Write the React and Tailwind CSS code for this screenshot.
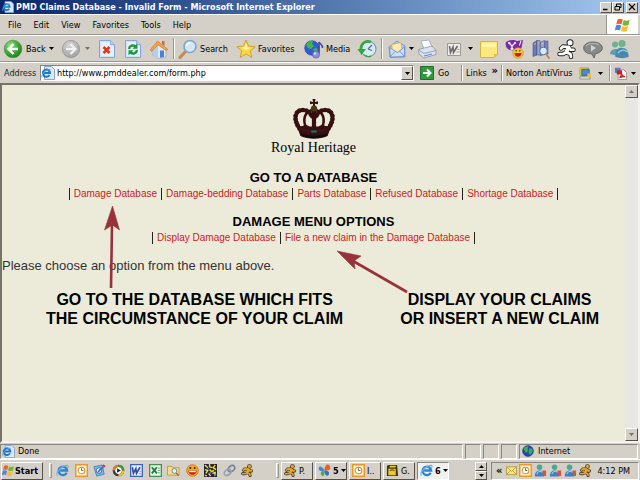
import React from "react";

const UI = "font-['DejaVu_Sans_Condensed','DejaVu_Sans',sans-serif]";

function Icon({ size = 20, box = 20, children }) {
  return (
    <svg width={size} height={size} viewBox={`0 0 ${box} ${box}`} className="shrink-0" aria-hidden="true">
      {children}
    </svg>
  );
}

const Caret = () => (
  <svg width="5" height="3" viewBox="0 0 5 3" className="shrink-0" aria-hidden="true">
    <path d="M0 0h5L2.500 3z" fill="currentColor" />
  </svg>
);

const Divider = () => <div className="mx-px my-0.5 w-0.5 shrink-0 self-stretch border-r border-l border-r-white border-l-[#9a968e]" />;

/* ---------- toolbar drawings ---------- */

const BackIcon = () => (
  <Icon>
    <defs>
      <radialGradient id="back" cx=".35" cy=".3" r=".8">
        <stop offset="0" stopColor="#9be08a" />
        <stop offset=".5" stopColor="#3fae37" />
        <stop offset="1" stopColor="#187a1c" />
      </radialGradient>
    </defs>
    <circle cx="10" cy="10" r="8.800" fill="url(#back)" stroke="#3b8f3b" strokeWidth=".6" />
    <path d="M10.500 5 5.500 10l5 5M6 10h9" fill="none" stroke="#fff" strokeWidth="2.400" />
  </Icon>
);
const ForwardIcon = () => (
  <Icon>
    <defs>
      <radialGradient id="fwd" cx=".4" cy=".3" r=".8">
        <stop offset="0" stopColor="#d6d6d6" />
        <stop offset="1" stopColor="#9c9c9c" />
      </radialGradient>
    </defs>
    <circle cx="10" cy="10" r="8.600" fill="url(#fwd)" stroke="#8d8d8d" strokeWidth=".7" />
    <path d="M9.500 5l5 5-5 5M14 10H5" fill="none" stroke="#f2f2f2" strokeWidth="2.200" />
  </Icon>
);
const Sheet = () => (
  <>
    <path d="M2.500 1.500h11l4 4v13h-15z" fill="#cfe2fb" stroke="#7fa6e0" />
    <path d="M4 3h9v4h4v10H4z" fill="#e6f0fe" />
    <path d="M13.500 1.500v4h4" fill="#b5d0f5" stroke="#7fa6e0" strokeWidth=".8" />
  </>
);
const StopIcon = () => (
  <Icon>
    <Sheet />
    <path d="M6.500 8l6 6M12.500 8l-6 6" stroke="#e2361b" strokeWidth="2.600" />
  </Icon>
);
const RefreshIcon = () => (
  <Icon>
    <Sheet />
    <path d="M6 10c.5-3.500 4-4.500 6.500-2.500M14 11c-.5 3.500-4 4.500-6.500 2.500" fill="none" stroke="#24953a" strokeWidth="2.400" />
    <path d="M14.500 4.500v5.200h-5zM5.500 16.500v-5.200h5z" fill="#24953a" />
  </Icon>
);
const HomeIcon = () => (
  <Icon>
    <path d="M3.500 9.500 9 4l8 6v8l-7 1.500L3.500 16z" fill="#dfeafa" stroke="#8aa5d2" strokeWidth=".7" />
    <path d="M3.500 9.500 9 5v14l-5.500-3z" fill="#b7cdf0" />
    <path d="M1 11 8.500 2 19 10.500l-2 1L9 6l-6.500 6.500z" fill="#f0a24b" stroke="#cc7427" strokeWidth=".6" />
    <path d="M13 2h2.500v5L13 5z" fill="#d26b36" />
    <path d="M11 11.500h4V18l-4 .8z" fill="#4f7fd0" />
  </Icon>
);
const SearchIcon = () => (
  <Icon>
    <path d="M7.500 12.500 2 18.500" stroke="#c7894c" strokeWidth="3" strokeLinecap="round" />
    <circle cx="12" cy="7.500" r="6" fill="#cfe8fb" stroke="#7da4d6" strokeWidth="1.600" />
    <path d="M8.500 7c.3-2 2-3.200 4-3" fill="none" stroke="#fff" strokeWidth="1.600" />
  </Icon>
);
const StarIcon = () => (
  <Icon>
    <path d="M10 1.200l2.600 6 6.600.5-5 4.300 1.700 6.500-5.900-3.600-5.800 3.600 1.600-6.500-5-4.300 6.600-.5z" fill="#fbd93d" stroke="#cf962a" strokeWidth=".9" strokeLinejoin="round" />
    <path d="M10 4l1.500 4.500 4 .2L10 11l-5-2.500 3.600-.3z" fill="#fff3a0" />
  </Icon>
);
const MediaIcon = () => (
  <Icon>
    <circle cx="8" cy="9" r="7.300" fill="#2d5fd0" stroke="#26439a" strokeWidth=".6" />
    <path d="M2 6c2-4 6-4.500 7-4l-1 3 2 2-3 3-3-1zM9 10l4-1 1 3-3 3z" fill="#43b548" />
    <path d="M15 15V3c1 2.500 4 2.500 3.500 6" fill="none" stroke="#4a47a6" strokeWidth="1.600" />
    <circle cx="12" cy="15.500" r="3.600" fill="#8d8be0" stroke="#4d4aa8" strokeWidth=".6" />
    <circle cx="11" cy="14.500" r="1.200" fill="#d9d8fb" />
  </Icon>
);
const HistoryIcon = () => (
  <Icon>
    <circle cx="11.500" cy="10" r="7.500" fill="#d6ecf2" stroke="#7b9bb0" strokeWidth="1.200" />
    <path d="M11 10l4-4M11 10l4 1.500" stroke="#4d6f95" strokeWidth="1.200" />
    <path d="M14 3C8 1 3.500 5 4 11" fill="none" stroke="#3aa445" strokeWidth="2.800" />
    <path d="M.5 10h8.500l-4.500 6z" fill="#3aa445" />
    <path d="M7 16c2 1.500 5 2 7 1" fill="none" stroke="#3aa445" strokeWidth="1.500" />
  </Icon>
);
const MailIcon = () => (
  <Icon>
    <path d="M2 8l8-6 8 5v11l-15 .5z" fill="#a5c6f0" stroke="#6791cc" strokeWidth=".8" />
    <path d="M5 5.500l9-2 1 7-5 3-5-3z" fill="#ffedb0" stroke="#e0a951" strokeWidth=".8" />
    <path d="M2.500 8.500l8 5 7-5.500v9.500l-14 .5z" fill="#c9dff9" stroke="#6791cc" strokeWidth=".8" />
    <path d="M3 18l5.500-6M17.500 17.500l-5-5.500" stroke="#6791cc" strokeWidth=".8" />
  </Icon>
);
const PrinterIcon = () => (
  <Icon>
    <path d="M4 2l8-1 3 7-8 2z" fill="#fff" stroke="#8fa5c5" strokeWidth=".8" />
    <path d="M1.500 10.500L15 7l4 4.500v4L7 19l-5-4z" fill="#dce3ee" stroke="#8594ad" strokeWidth=".8" />
    <path d="M2 11l5 3.500 12-3" fill="none" stroke="#8594ad" strokeWidth=".8" />
    <path d="M7 17l8-2" stroke="#5f8edb" strokeWidth="1.200" />
  </Icon>
);
const GreyWordIcon = () => (
  <Icon>
    <path d="M3.500 4.500h13v12h-13z" fill="#ecebe8" stroke="#9b9a97" />
    <path d="M5.500 7l1 6.500L9 8l.5 5.500L13.500 7" fill="none" stroke="#6a6a6a" strokeWidth="1.600" />
    <path d="M13.500 10.500h2M12.500 13h3" stroke="#a0a0a0" />
  </Icon>
);
const NoteIcon = () => (
  <Icon>
    <path d="M1.500 2.500h17v12.500l-3.500 3.500H1.500z" fill="#fde77f" stroke="#d6b33c" />
    <path d="M3 4h14v4H3z" fill="#fff3ae" />
    <path d="M18.500 15H15v3.500z" fill="#e5bd3a" />
  </Icon>
);
const YahooIcon = () => (
  <Icon>
    <path d="M1 3c4-3 9-2 11-1l6-1-1.500 8-3 3-9-1C0 9 .5 5 1 3z" fill="#7a2aa8" />
    <path d="M4 4l3 3 3-3M7 7v3M5.500 10h3M3 4h2.500M9 4h2" stroke="#fff" strokeWidth="1.300" fill="none" />
    <path d="M16 1.500l-1.500 5" stroke="#fff" strokeWidth="1" />
    <circle cx="13" cy="14" r="5.300" fill="#fac42d" stroke="#c98a17" strokeWidth=".6" />
    <path d="M9.500 14h7c0 5-7 5-7 0z" fill="#c02318" />
    <circle cx="11.200" cy="11.800" r=".8" fill="#333" />
    <circle cx="14.800" cy="11.800" r=".8" fill="#333" />
  </Icon>
);
const BookIcon = () => (
  <Icon>
    <path d="M2 4l4-2.500V16l-4 1.500z" fill="#6f78b6" stroke="#4b5590" strokeWidth=".6" />
    <path d="M6 1.500h3V16H6zM9.500 3l4-1.500V15l-4 2z" fill="#9aa5d4" stroke="#4b5590" strokeWidth=".6" />
    <path d="M14 2h3v13h-3z" fill="#7c87be" stroke="#4b5590" strokeWidth=".6" />
    <path d="M3 5.500l2-1M10.500 5l2-.6M7 4h1.500" stroke="#e4c45a" />
    <circle cx="12.500" cy="12" r="3.800" fill="#d5ecfb" stroke="#56789e" />
    <path d="M15 15l3 4" stroke="#c08a4b" strokeWidth="2" strokeLinecap="round" />
  </Icon>
);
function Runner({ size = 20, fill = "#fff" }) {
  const body = "M11.500 8.500L9 13M11 8l-5-.5-2 2M12 8.500l1.500 2.200h3M9 13.500l-3 1.500H2.500M9.500 13.500l4 1.500.5 3";
  return (
    <Icon size={size}>
      <circle cx="13" cy="3.800" r="3.500" fill="#222" />
      <path d={body} stroke="#222" strokeWidth="4.400" strokeLinecap="round" strokeLinejoin="round" fill="none" />
      <circle cx="13" cy="3.800" r="2.500" fill={fill} />
      <path d={body} stroke={fill} strokeWidth="2.600" strokeLinecap="round" strokeLinejoin="round" fill="none" />
      <path d="M11.500 8.500L9.500 13" stroke={fill} strokeWidth="4" strokeLinecap="round" />
    </Icon>
  );
}
const BubbleIcon = () => (
  <Icon>
    <path d="M10 3c5.500 0 9.300 2.500 9.300 6 0 3-2.800 5-6.800 5.700L11 19l-2-4C4 14.800.7 12.400.7 9 .7 5.500 4.500 3 10 3z" fill="#8a8a8a" stroke="#595959" strokeWidth=".8" />
    <path d="M3 7c2-3 10-3.500 13-1" stroke="#bdbdbd" fill="none" />
    <path d="M8 6l5 3-5 3.500z" fill="#d4d4d4" />
  </Icon>
);
function Buddies({ size = 20 }) {
  return (
    <Icon size={size}>
      <circle cx="6" cy="5.500" r="3" fill="#6fae92" />
      <path d="M1 15c0-6 10-7 11-1l-3 3z" fill="#5f9fb4" />
      <circle cx="13" cy="4.500" r="3.600" fill="#6cb28a" />
      <path d="M6.500 18c-1-8 4-10 7-9 5 0 6.500 5 6 9-4 1.500-9 1.500-13 0z" fill="#4c86ae" />
      <path d="M9 14c2-3 6-4 10-1" stroke="#8fcdc9" strokeWidth="1.500" fill="none" />
    </Icon>
  );
}

/* ---------- small drawings ---------- */

function IEIcon({ size = 13 }) {
  return (
    <Icon size={size} box={14}>
      <path d="M11.500 9.500A4.600 4.600 0 1 1 12 7H4.500" fill="none" stroke="#2b83d8" strokeWidth="2.500" />
      <path d="M1.500 12.500C-1 9 7 1 12.500 1.500c1 .8.500 2-.3 3" fill="none" stroke="#67b2ee" strokeWidth="1.200" />
    </Icon>
  );
}
function IEPage({ size = 14 }) {
  return (
    <Icon size={size} box={14}>
      <path d="M3.500.5h7l3 3v10h-10z" fill="#dbe9fc" stroke="#7d9fd0" strokeWidth=".9" />
      <path d="M8.500 9A3.600 3.600 0 1 1 9 7H3" fill="none" stroke="#1f76cc" strokeWidth="2" />
      <path d="M1 11.500C-.5 9 5 3 9.500 3.500" fill="none" stroke="#5daaf0" />
    </Icon>
  );
}
function WindowsLogo({ size = 14 }) {
  return (
    <Icon size={size} box={16}>
      <path d="M2.500 2.500c2-1.200 3.500-1 5.200 0L6.500 7.500C5 6.500 3.300 6.500 1.300 7.500z" fill="#e8642c" />
      <path d="M8.700 3c2 1 3.700 1 6-.2L13.500 8c-2 1-4 1-6 0z" fill="#74b53c" />
      <path d="M1 8.600c2-1.200 3.500-1 5.200 0L5 13.600c-1.500-1-3.200-1-5.200 0z" fill="#4a86dc" />
      <path d="M7.200 9c2 1 3.700 1 6-.2L12 14c-2 1-4 1-6 0z" fill="#f5be32" />
    </Icon>
  );
}
const Globe = ({ size = 12 }) => (
  <Icon size={size} box={12}>
    <circle cx="6" cy="6" r="5.400" fill="#2346b8" stroke="#182a6b" strokeWidth=".6" />
    <path d="M1.500 4C3 1 6 1 6.500 1.500L5.500 4l1 1.500L4 8zM7.500 3l3 1v3l-2.500 3-1.500-3z" fill="#39b24a" />
  </Icon>
);
const ClockIcon = ({ size = 13 }) => (
  <Icon size={size} box={14}>
    <path d="M.8.8h12.400v12.400H.8z" fill="#fff3cf" stroke="#e79a2b" strokeWidth="1.600" />
    <circle cx="7" cy="7" r="3.600" fill="#fff" stroke="#d28b2f" strokeWidth="1.100" />
    <path d="M7 4.500V7h2" fill="none" stroke="#7d5a22" />
  </Icon>
);
const ComposeIcon = () => (
  <Icon size={13} box={14}>
    <path d="M1 3l9-2 2 10-8 2z" fill="#7fb8ee" stroke="#2f72b8" strokeWidth=".8" />
    <circle cx="6.500" cy="7" r="3" fill="#e9f4ff" stroke="#2468b4" />
    <path d="M5.500 8.500l6-6" stroke="#3d65a8" strokeWidth="1.600" />
    <path d="M11 1l2 2" stroke="#d23d28" strokeWidth="1.800" />
  </Icon>
);
const PlayerIcon = () => (
  <Icon size={13} box={14}>
    <circle cx="7" cy="7" r="5" fill="#fff" strokeWidth="2.600" stroke="#333a46" />
    <path d="M2 7a5 5 0 0 1 5-5" fill="none" stroke="#eb7a29" strokeWidth="2.600" />
    <path d="M7 2a5 5 0 0 1 5 5" fill="none" stroke="#3a9a3c" strokeWidth="2.600" />
    <path d="M12 7a5 5 0 0 1-5 5" fill="none" stroke="#f0c02f" strokeWidth="2.600" />
    <path d="M5.500 4.500l4 2.500-4 2.500z" fill="#222" />
  </Icon>
);
const WordIcon = () => (
  <Icon size={13} box={14}>
    <path d="M.7.700h12.600v12.600H.7z" fill="#e8effb" stroke="#3c64b5" strokeWidth="1.400" />
    <path d="M2.500 3.500l1.200 6.500L6.300 5l.7 5 3.800-6.500" fill="none" stroke="#2b50a0" strokeWidth="1.800" />
    <path d="M10.500 8h1.500M9.500 10.500h2.500" stroke="#7d97cf" />
  </Icon>
);
const ExcelIcon = () => (
  <Icon size={13} box={14}>
    <path d="M.7.700h12.600v12.600H.7z" fill="#e7f5ea" stroke="#3f9350" strokeWidth="1.400" />
    <path d="M3 3.500L8.500 10M8.500 3.500L3 10" stroke="#237a38" strokeWidth="2" />
    <path d="M9.500 4.500H12M9.500 7H12M9.500 9.500H12" stroke="#5da96b" strokeWidth=".9" />
  </Icon>
);
const FolderIcon = () => (
  <Icon size={13} box={14}>
    <path d="M.5 2.500h5l1 1.500h6.500v8H.5z" fill="#f7da86" stroke="#b88b35" strokeWidth=".8" />
    <circle cx="8" cy="7.500" r="2.600" fill="#e6f4fd" stroke="#6d7f94" />
    <path d="M10 9.500l2.500 3" stroke="#8c6a3a" strokeWidth="1.500" />
  </Icon>
);
const SmileyIcon = () => (
  <Icon size={13} box={14}>
    <circle cx="7" cy="7" r="6.300" fill="#f7a81f" stroke="#d26a16" strokeWidth=".8" />
    <path d="M2.500 7h9c0 6-9 6-9 0z" fill="#c3261a" />
    <path d="M3.500 7.300h7v1.500h-7z" fill="#fff" />
    <circle cx="4.700" cy="4.300" r="1.100" fill="#3a2410" />
    <circle cx="9.300" cy="4.300" r="1.100" fill="#3a2410" />
  </Icon>
);
const MazeIcon = () => (
  <Icon size={13} box={14}>
    <path d="M0 0h14v14H0z" fill="#20243c" />
    <path d="M1 1l3 3M6 0v3l3 1M12 1l-2 3 3 2M1 6l3 1-2 3M6 6l2 2 3-1M5 10l2 3M9 10l3-1v3M1 12l2 1" fill="none" stroke="#f5e023" strokeWidth="1.500" />
    <path d="M5 5l-2 1M8 10l-2-1M11 13l2-2" stroke="#3d8be0" strokeWidth="1.300" />
  </Icon>
);
const ChainIcon = () => (
  <Icon size={13} box={14}>
    <ellipse cx="9" cy="5" rx="4" ry="2.800" transform="rotate(-35 9 5)" fill="none" stroke="#73839c" strokeWidth="1.700" />
    <ellipse cx="5" cy="9" rx="4" ry="2.800" transform="rotate(-35 5 9)" fill="none" stroke="#94a2b8" strokeWidth="1.700" />
  </Icon>
);
const NortonIcon = () => (
  <Icon size={13} box={14}>
    <path d="M1 1h9v8H1z" fill="#f2d34b" stroke="#a98b2b" strokeWidth=".7" />
    <path d="M3 2.500h8V9H3z" fill="#4d86d8" stroke="#27509a" strokeWidth=".8" />
    <path d="M1 10.500h11V13H1z" fill="#e2e2da" stroke="#777" strokeWidth=".7" />
    <path d="M9 7h4v4H9z" fill="#f4bd2d" />
  </Icon>
);
const PdfIcon = () => (
  <Icon size={13} box={14}>
    <path d="M4.500 3h6l3 3v7.500h-9z" fill="#fff" stroke="#777" strokeWidth=".7" />
    <path d="M1 .8h6v5.500H1z" fill="#4c7fc9" />
    <path d="M3 3.500h5.500V8H3z" fill="#cf2020" />
    <path d="M6 11.500c2-2 2.500-5 2-5.500s-1 3 4 4.500c-2-.8-5 .5-6 1z" fill="none" stroke="#cf2020" strokeWidth="1.400" />
  </Icon>
);
const MsnButterfly = () => (
  <Icon size={13} box={14}>
    <path d="M7 7C3 0 0 3 1 6c.5 2 3 2 6 1z" fill="#3f88d4" />
    <path d="M7 7c0-7 5-8 6-4s-2 4-6 4z" fill="#e9602b" />
    <path d="M7 7c-5 0-5 5-2 6 2 .3 2-3 2-6z" fill="#4ba65b" />
    <path d="M7 7c5 0 6 3 4 5s-4-1-4-5z" fill="#2f75bd" />
  </Icon>
);
const GoldJar = () => (
  <Icon size={13} box={14}>
    <path d="M1 2l2-1h9l1 12H1z" fill="#3c3512" />
    <path d="M2.500 5h8v7h-8zM4 1.800h7l-1 2H4z" fill="#efc928" />
    <path d="M4 7.500c1.500-1.500 4-1.500 5 0" stroke="#7c5d10" strokeWidth="1.200" fill="none" />
  </Icon>
);
const Envelope = () => (
  <Icon size={11} box={12}>
    <path d="M.5 2h11v8.500H.5z" fill="#fbe58c" stroke="#b99432" strokeWidth=".9" />
    <path d="M.5 2L6 7l5.500-5M.5 10.500l4-4M11.500 10.500l-4-4" fill="none" stroke="#b99432" strokeWidth=".9" />
  </Icon>
);
const TrayBuddy = () => (
  <Icon size={13} box={14}>
    <circle cx="6" cy="3.500" r="3" fill="#4fa88c" />
    <path d="M1 13.500C0 6 10.500 4 11 13.500z" fill="#3e80bf" />
    <path d="M3 11c1-3 4-4 6-2" stroke="#8cc9e6" strokeWidth="1.200" fill="none" />
    <path d="M9 7h4v6h-3z" fill="#dd5135" />
  </Icon>
);

/* The wordmark stays text; only the crown is drawn. */
const Crown = () => (
  <svg width="44" height="42" viewBox="0 0 42 42" preserveAspectRatio="none" aria-hidden="true">
    <g fill="none" stroke="#35100f" strokeLinecap="round">
      <path d="M9 33C-1 20 4 12 10 12c5 0 8 3 9 7" strokeWidth="3" />
      <path d="M33 33c10-13 5-21-1-21-5 0-8 3-9 7" strokeWidth="3" />
      <path d="M14 32C9 20 13 14 19 12M28 32c5-12 1-18-5-20" strokeWidth="2.400" />
      <path d="M21 10v20" strokeWidth="4" />
      <path d="M9 33C-1 20 4 12 10 12c5 0 8 3 9 7M33 33c10-13 5-21-1-21-5 0-8 3-9 7" strokeWidth="4.600" strokeDasharray="0.1 3.200" />
    </g>
    <path d="M19.500 1h3l-.7 3 3-.7v3l-3-.5.7 3.700h-3l.7-3.700-3 .5v-3l3 .7z" fill="#35100f" />
    <circle cx="21" cy="10.500" r="3" fill="#4a3a12" />
    <path d="M4 26c5 5 8 0 10 1s4 3 7 0c3 3 5 1 7 0s5 4 10-1l-4 12c-8 3.500-18 3.500-26 0z" fill="#35100f" />
    <path d="M8.500 35c8 3.500 17 3.500 25 0l-.7 3c-8 3-16 3-23.600 0z" fill="#160909" />
    <path d="M8 31c8 3 18 3 26 0" stroke="#4d1a17" strokeWidth="1.200" fill="none" />
    <ellipse cx="21" cy="33.500" rx="3" ry="1.200" fill="#1c6b60" />
  </svg>
);

/* ---------- chrome ---------- */

function Tool({ label, children, caret, text, className = "w-[26px] justify-center" }) {
  return (
    <button type="button" aria-label={label} className={`flex h-full shrink-0 items-center gap-0.5 ${className}`}>
      {children}
      {text && <span>{text}</span>}
      {caret && <Caret />}
    </button>
  );
}

const raised = "border border-t-white border-l-white border-r-[#55524c] border-b-[#55524c] bg-[#d4d0c8]";
const sunken = "border border-t-[#8a867e] border-l-[#8a867e] border-r-white border-b-white";

function TitleBar() {
  const btn = `${raised} flex h-[11px] w-3 items-center justify-center`;
  return (
    <header className="flex h-3.5 items-center bg-linear-to-r from-[#0a246a] to-[#a6caf0] px-0.5">
      <IEPage size={12} />
      <h1 className="ml-0.5 flex-1 truncate text-[9px] font-bold text-white">PMD Claims Database - Invalid Form - Microsoft Internet Explorer</h1>
      <button type="button" aria-label="Minimize" className={btn}>
        <svg width="8" height="8" viewBox="0 0 8 8"><path d="M1 6.500h4.500" stroke="#000" strokeWidth="1.500" /></svg>
      </button>
      <button type="button" aria-label="Restore" className={btn}>
        <svg width="8" height="8" viewBox="0 0 8 8"><path d="M2.500 3V1h4.500v3.500H5.500M1 3.500h4.500v3.500H1z" fill="none" stroke="#000" /></svg>
      </button>
      <button type="button" aria-label="Close" className={`${btn} ml-0.5`}>
        <svg width="8" height="8" viewBox="0 0 8 8"><path d="M1 1l6 6M7 1L1 7" stroke="#000" strokeWidth="1.300" /></svg>
      </button>
    </header>
  );
}

function MenuBar() {
  return (
    <nav className="flex h-[21px] items-stretch border-t border-b border-t-white border-b-[#9a968e] pl-0.5">
      {["File", "Edit", "View", "Favorites", "Tools", "Help"].map((m) => (
        <button key={m} type="button" className="px-1.5">{m}</button>
      ))}
      <div className="mr-0.5 ml-auto flex w-8 items-center justify-center border-l border-l-[#9a968e] bg-white">
        <WindowsLogo size={16} />
      </div>
    </nav>
  );
}

function ToolBar() {
  return (
    <div className="flex h-[27px] items-center overflow-hidden border-t border-b border-t-white border-b-[#9a968e]">
      <Tool label="Back" text="Back" caret className="w-[58px] gap-[3px] pl-[3px]"><BackIcon /></Tool>
      <Tool label="Forward" caret className="w-9 gap-1 pl-[3px] text-[#77736b]"><ForwardIcon /></Tool>
      <Tool label="Stop"><StopIcon /></Tool>
      <Tool label="Refresh"><RefreshIcon /></Tool>
      <Tool label="Home"><HomeIcon /></Tool>
      <Divider />
      <Tool label="Search" text="Search" className="w-[58px] pl-0.5"><SearchIcon /></Tool>
      <Tool label="Favorites" text="Favorites" className="w-[68px] pl-0.5"><StarIcon /></Tool>
      <Tool label="Media" text="Media" className="w-[52px] pl-0.5"><MediaIcon /></Tool>
      <Tool label="History"><HistoryIcon /></Tool>
      <Divider />
      <Tool label="Mail" caret className="w-[30px] pl-[3px]"><MailIcon /></Tool>
      <Tool label="Print"><PrinterIcon /></Tool>
      <Tool label="Edit with Word" caret className="w-9 gap-1 pl-1"><GreyWordIcon /></Tool>
      <Tool label="Note"><NoteIcon /></Tool>
      <Tool label="Yahoo Messenger"><YahooIcon /></Tool>
      <Tool label="Research"><BookIcon /></Tool>
      <Tool label="AIM"><Runner /></Tool>
      <Tool label="Talk"><BubbleIcon /></Tool>
      <Tool label="Messenger"><Buddies /></Tool>
    </div>
  );
}

function AddressBar() {
  return (
    <div className="flex h-[21px] items-center border-t border-t-white px-1">
      <label htmlFor="address" className="w-9 shrink-0 text-[#222]">Address</label>
      <div className={`${sunken} flex h-4 min-w-0 flex-1 items-center bg-white`}>
        <IEPage />
        <input id="address" type="text" defaultValue="http://www.pmddealer.com/form.php" className="ml-0.5 min-w-0 flex-1 bg-transparent outline-none" />
        <button type="button" aria-label="Show addresses" className={`${raised} flex h-full w-3 items-center justify-center`}><Caret /></button>
      </div>
      <Tool label="Go" text="Go" className="ml-1.5 w-10 gap-1">
        <Icon size={14} box={14}>
          <path d="M.5.500h13v13H.5z" fill="#2f9a3a" stroke="#1f7029" />
          <path d="M3 7h7M7 3.500L10.500 7 7 10.500" fill="none" stroke="#fff" strokeWidth="2" />
        </Icon>
      </Tool>
      <Divider />
      <Tool label="Links" className="w-9 justify-between px-0.5">
        <span>Links</span>
        <span className="-mt-1 text-[11px] font-bold">»</span>
      </Tool>
      <Divider />
      <Tool label="Norton AntiVirus" caret className="w-[104px] gap-1.5 pl-0.5">
        <span className="whitespace-nowrap">Norton AntiVirus</span>
        <NortonIcon />
      </Tool>
      <Divider />
      <Tool label="PDF" caret className="w-6 gap-1 pl-0.5"><PdfIcon /></Tool>
    </div>
  );
}

/* ---------- page ---------- */

function MenuList({ title, items }) {
  return (
    <section>
      <h2 className="text-[13px] leading-4 font-bold">{title}</h2>
      <ul className="flex h-4 items-center justify-center text-[10px]">
        <li className="h-3 w-px bg-[#222]" />
        {items.map((t) => (
          <li key={t} className="flex h-3 items-center border-r border-r-[#222] px-1 text-[#cc1a22]">
            <a href="#">{t}</a>
          </li>
        ))}
      </ul>
    </section>
  );
}

function Scrollbar() {
  const btn = `${raised} flex h-[13px] w-full items-center justify-center text-[#77736b]`;
  return (
    <div className="flex w-[13px] shrink-0 flex-col justify-between bg-[#e8e7e3]">
      <button type="button" aria-label="Scroll up" className={btn}><span className="rotate-180"><Caret /></span></button>
      <button type="button" aria-label="Scroll down" className={btn}><Caret /></button>
    </div>
  );
}

function Page() {
  return (
    <div className="flex flex-1 border-2 border-t-[#77736b] border-r-[#f4f3ef] border-b-[#f4f3ef] border-l-[#77736b]">
      <main className="relative flex-1 bg-[#ecebda] pt-[13px] font-['Liberation_Sans',Arial,sans-serif] text-black">
        <div className="flex flex-col items-center">
          <Crown />
          <p className="font-['Liberation_Serif',serif] text-[14px] leading-4">Royal Heritage</p>
        </div>
        <div className="mt-3.5 space-y-3 text-center">
          <MenuList title="GO TO A DATABASE" items={["Damage Database", "Damage-bedding Database", "Parts Database", "Refused Database", "Shortage Database"]} />
          <MenuList title="DAMAGE MENU OPTIONS" items={["Display Damage Database", "File a new claim in the Damage Database"]} />
        </div>
        <p className="mt-3 text-[13px] leading-4 text-[#333]">Please choose an option from the menu above.</p>
        <div className="mx-auto mt-4 flex max-w-[624px] justify-between pr-[26px] pl-11 text-center text-[16px] leading-[19px] font-bold">
          <p>GO TO THE DATABASE WHICH FITS<br />THE CIRCUMSTANCE OF YOUR CLAIM</p>
          <p>DISPLAY YOUR CLAIMS<br />OR INSERT A NEW CLAIM</p>
        </div>
        <svg width="624" height="220" viewBox="0 0 624 220" className="pointer-events-none absolute top-0 left-1/2 -translate-x-1/2" aria-hidden="true">
          <g fill="#983238" stroke="#983238">
            <path d="M109 203l1-63" strokeWidth="2.600" />
            <path d="M110.500 121l7 24-7-5-8 5z" strokeWidth=".6" />
            <path d="M405 207l-54-31" strokeWidth="2.600" />
            <path d="M335 166l24 5-7 5 1 8z" strokeWidth=".6" />
          </g>
        </svg>
      </main>
      <Scrollbar />
    </div>
  );
}

function StatusBar() {
  const cell = `${sunken} h-[15px]`;
  return (
    <footer className="flex h-4 items-center gap-0.5 pr-0.5">
      <div className={`${cell} flex flex-1 items-center gap-[3px] pl-px`}><IEPage size={13} />Done</div>
      <div className={`${cell} w-4`} />
      <div className={`${cell} w-4`} />
      <div className={`${cell} w-4`} />
      <div className={`${cell} flex w-[119px] items-center gap-1 pl-0.5`}><Globe />Internet</div>
    </footer>
  );
}

const quick = [
  ["Internet Explorer", <IEIcon />],
  ["Outlook", <ClockIcon />],
  ["Outlook Express", <ComposeIcon />],
  ["Media Player", <PlayerIcon />],
  ["Word", <WordIcon />],
  ["Excel", <ExcelIcon />],
  ["Find files", <FolderIcon />],
  ["Yahoo Messenger", <SmileyIcon />],
  ["Maze", <MazeIcon />],
  ["Connections", <ChainIcon />],
  ["AIM", <Runner size={13} fill="#eaa51e" />],
];
const tasks = [
  ["P.", <Runner size={13} fill="#eaa51e" />],
  ["5", <MsnButterfly />, "group"],
  ["I..", <ClockIcon />],
  ["G.", <GoldJar />],
  ["6", <IEIcon />, "active"],
];

const Grip = () => <div className="h-[15px] w-[3px] shrink-0 border border-t-white border-r-[#9a968e] border-b-[#9a968e] border-l-white" />;

function TaskBar() {
  return (
    <footer className="flex h-[21px] items-center border-t border-t-white px-px pt-px">
      <button type="button" className={`${raised} flex h-[18px] w-[42px] shrink-0 items-center text-[9px] font-bold`}>
        <WindowsLogo size={13} />Start
      </button>
      <div className="ml-1.5 flex items-center gap-1"><Grip /></div>
      <div className="ml-1 flex w-[198px] shrink-0 justify-between">
        {quick.map(([name, icon]) => (
          <button key={name} type="button" aria-label={name}>{icon}</button>
        ))}
      </div>
      <div className="ml-[22px]"><Grip /></div>
      <div className="ml-0.5 flex flex-1 gap-0.5">
        {tasks.map(([name, icon, kind]) => (
          <button key={name} type="button" className={`flex h-[18px] w-8 items-center gap-0.5 overflow-hidden pl-0.5 ${kind === "active" ? `${sunken} bg-[#f1f0ec]` : raised} ${kind ? "font-bold" : ""}`}>
            {icon}{name}{kind && <Caret />}
          </button>
        ))}
      </div>
      <div className="mr-1 flex w-3 flex-col">
        <button type="button" aria-label="Previous" className={`${raised} flex h-[9px] items-center justify-center`}><span className="rotate-180"><Caret /></span></button>
        <button type="button" aria-label="Next" className={`${raised} flex h-[9px] items-center justify-center`}><Caret /></button>
      </div>
      <div className={`${sunken} flex h-[18px] w-[148px] shrink-0 items-center gap-0.5 pl-1`}>
        <span className="w-2 text-[11px] font-bold">«</span>
        <Envelope />
        <ClockIcon />
        <TrayBuddy />
        <TrayBuddy />
        <TrayBuddy />
        <Runner size={13} fill="#eaa51e" />
        <span className="ml-auto pr-2 whitespace-nowrap">4:12 PM</span>
      </div>
    </footer>
  );
}

export default function App() {
  return (
    <div className={`flex min-h-screen flex-col bg-[#d4d0c8] text-[9px] leading-3 text-black ${UI}`}>
      <TitleBar />
      <MenuBar />
      <ToolBar />
      <AddressBar />
      <Page />
      <StatusBar />
      <TaskBar />
    </div>
  );
}
